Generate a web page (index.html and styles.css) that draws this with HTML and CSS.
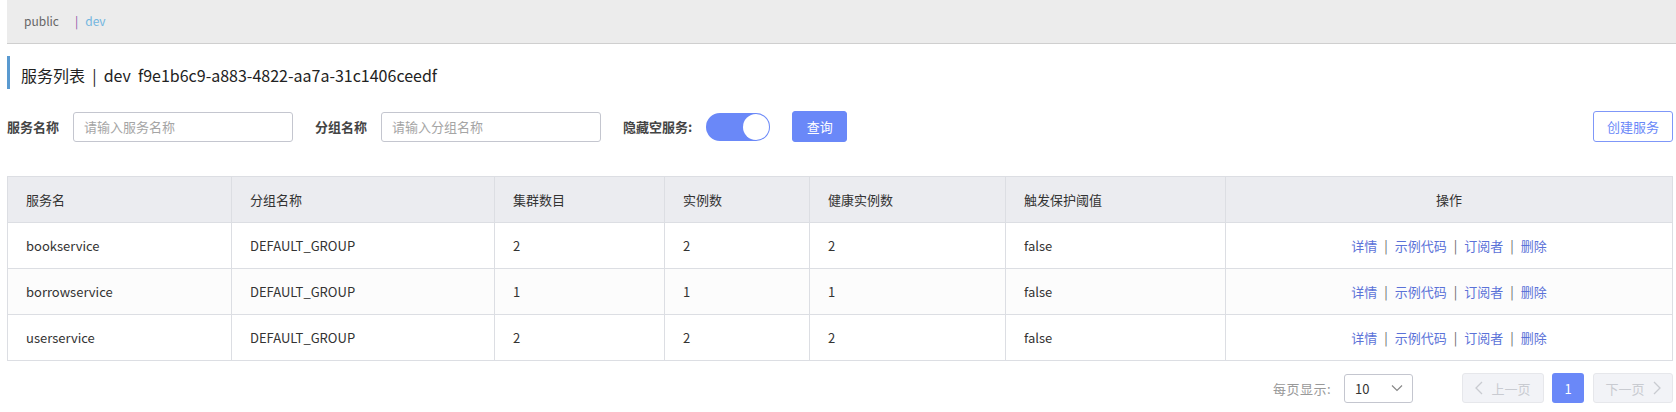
FILE: index.html
```html
<!DOCTYPE html>
<html lang="zh">
<head>
<meta charset="utf-8">
<link rel="stylesheet" href="styles.css">
</head>
<body>
<div class="page">
  <div class="ns-bar">
    <span class="ns-item">public</span>
    <span class="ns-sep">|</span>
    <span class="ns-item active">dev</span>
  </div>

  <div class="title">服务列表 &nbsp;|&nbsp; dev&nbsp; f9e1b6c9-a883-4822-aa7a-31c1406ceedf</div>

  <div class="filters">
    <label class="flabel">服务名称</label>
    <input class="finput" type="text" placeholder="请输入服务名称">
    <label class="flabel">分组名称</label>
    <input class="finput" type="text" placeholder="请输入分组名称">
    <label class="flabel">隐藏空服务:</label>
    <span class="switch"><span class="knob"></span></span>
    <button class="btn primary">查询</button>
    <button class="btn outline">创建服务</button>
  </div>

  <table class="grid">
    <colgroup>
      <col class="c1"><col class="c2"><col class="c3"><col class="c4"><col class="c5"><col class="c6"><col class="c7">
    </colgroup>
    <thead>
      <tr><th>服务名</th><th>分组名称</th><th>集群数目</th><th>实例数</th><th>健康实例数</th><th>触发保护阈值</th><th class="center">操作</th></tr>
    </thead>
    <tbody>
      <tr><td>bookservice</td><td>DEFAULT_GROUP</td><td>2</td><td>2</td><td>2</td><td>false</td>
        <td class="center"><a>详情</a><span class="bar">|</span><a>示例代码</a><span class="bar">|</span><a>订阅者</a><span class="bar">|</span><a>删除</a></td></tr>
      <tr class="alt"><td>borrowservice</td><td>DEFAULT_GROUP</td><td>1</td><td>1</td><td>1</td><td>false</td>
        <td class="center"><a>详情</a><span class="bar">|</span><a>示例代码</a><span class="bar">|</span><a>订阅者</a><span class="bar">|</span><a>删除</a></td></tr>
      <tr><td>userservice</td><td>DEFAULT_GROUP</td><td>2</td><td>2</td><td>2</td><td>false</td>
        <td class="center"><a>详情</a><span class="bar">|</span><a>示例代码</a><span class="bar">|</span><a>订阅者</a><span class="bar">|</span><a>删除</a></td></tr>
    </tbody>
  </table>

  <div class="pager">
    <span class="plabel">每页显示:</span>
    <span class="select">10
      <svg class="chev" width="12" height="8" viewBox="0 0 12 8"><path d="M1 1.5 L6 6.5 L11 1.5" fill="none" stroke="#888" stroke-width="1.2"/></svg>
    </span>
    <span class="pbtn prev"><svg width="8" height="14" viewBox="0 0 8 14"><path d="M7 1 L1 7 L7 13" fill="none" stroke="#c9cbd1" stroke-width="1.3"/></svg>上一页</span>
    <span class="pnum">1</span>
    <span class="pbtn next">下一页<svg width="8" height="14" viewBox="0 0 8 14"><path d="M1 1 L7 7 L1 13" fill="none" stroke="#c9cbd1" stroke-width="1.3"/></svg></span>
  </div>
</div>
</body>
</html>
```

FILE: styles.css
```css
* { box-sizing: border-box; }
body {
  margin: 0;
  font-family: "Noto Sans CJK SC", "Noto Sans", sans-serif;
  color: #333;
  background: #fff;
}
.page {
  padding: 0 3px 0 7px;
}
.ns-bar {
  height: 44px;
  margin-right: -3px;
  background: #ececec;
  border-bottom: 1px solid #cfcfcf;
  display: flex;
  align-items: center;
  padding-left: 17px;
  font-size: 12px;
  padding-bottom: 2px;
}
.ns-item { color: #666; }
.ns-item.active { color: #73b6e0; }
.ns-sep { color: #8a5aa8; margin: 0 7px 0 16px; }

.title {
  margin-top: 12px;
  height: 33px;
  border-left: 3px solid #5a9ad0;
  padding-left: 11px;
  font-size: 16px;
  line-height: 33px;
  padding-top: 3px;
  color: #222;
  white-space: pre;
}

.filters {
  margin-top: 22px;
  display: flex;
  align-items: center;
  height: 31px;
}
.flabel {
  font-size: 13px;
  font-weight: bold;
  color: #444;
  margin-right: 14px;
}
.finput {
  width: 220px;
  height: 30px;
  border: 1px solid #c4c6cf;
  border-radius: 3px;
  padding: 0 10px;
  font-family: inherit;
  font-size: 13px;
  margin-right: 22px;
  outline: none;
}
.finput::placeholder { color: #a5a5a5; }
.switch {
  width: 64px;
  height: 28px;
  border-radius: 14px;
  background: #6a88f8;
  display: flex;
  justify-content: flex-end;
  align-items: center;
  padding: 1px;
  margin-right: 22px;
}
.knob {
  width: 26px;
  height: 26px;
  border-radius: 50%;
  background: #fff;
}
.btn {
  height: 31px;
  border-radius: 3px;
  font-family: inherit;
  font-size: 13px;
  padding: 0;
  cursor: pointer;
}
.btn.primary {
  width: 55px;
  background: #6a88f8;
  border: 1px solid #6a88f8;
  color: #fff;
}
.btn.outline {
  width: 80px;
  margin-left: auto;
  background: #fff;
  border: 1px solid #7f97f8;
  color: #6a88f8;
}

.grid {
  margin-top: 34px;
  width: 100%;
  border-collapse: collapse;
  table-layout: fixed;
  font-size: 13px;
}
.c1 { width: 224px; }
.c2 { width: 263px; }
.c3 { width: 170px; }
.c4 { width: 145px; }
.c5 { width: 196px; }
.c6 { width: 220px; }
.grid th, .grid td {
  border: 1px solid #dcdee3;
  height: 46px;
  padding: 0 0 0 18px;
  text-align: left;
  font-weight: normal;
  color: #333;
}
.grid th { background: #ebecf0; }
.grid td { background: #fff; }
.grid tr.alt td { background: #fcfcfc; }
.grid .center { text-align: center; padding-left: 0; }
.grid a { color: #5b72d8; }
.bar { color: #666; margin: 0 7px; }

.pager {
  margin-top: 12px;
  display: flex;
  justify-content: flex-end;
  align-items: center;
  height: 30px;
}
.plabel { font-size: 13px; color: #999; margin-right: 13px; letter-spacing: 0.5px; }
.select {
  width: 69px;
  height: 29px;
  border: 1px solid #c4c6cf;
  border-radius: 3px;
  display: flex;
  align-items: center;
  justify-content: space-between;
  padding: 0 9px 0 10px;
  font-size: 13px;
  color: #333;
  margin-right: 49px;
}
.pbtn {
  height: 30px;
  border: 1px solid #e6e7eb;
  background: #f2f3f7;
  border-radius: 3px;
  color: #c9cbd1;
  font-size: 13px;
  display: flex;
  align-items: center;
  justify-content: center;
  gap: 8px;
}
.prev { width: 82px; margin-right: 8px; }
.next { width: 80px; margin-left: 9px; }
.pnum {
  width: 32px;
  height: 30px;
  border-radius: 3px;
  background: #6a88f8;
  color: #fff;
  font-size: 13px;
  display: flex;
  align-items: center;
  justify-content: center;
}
```
